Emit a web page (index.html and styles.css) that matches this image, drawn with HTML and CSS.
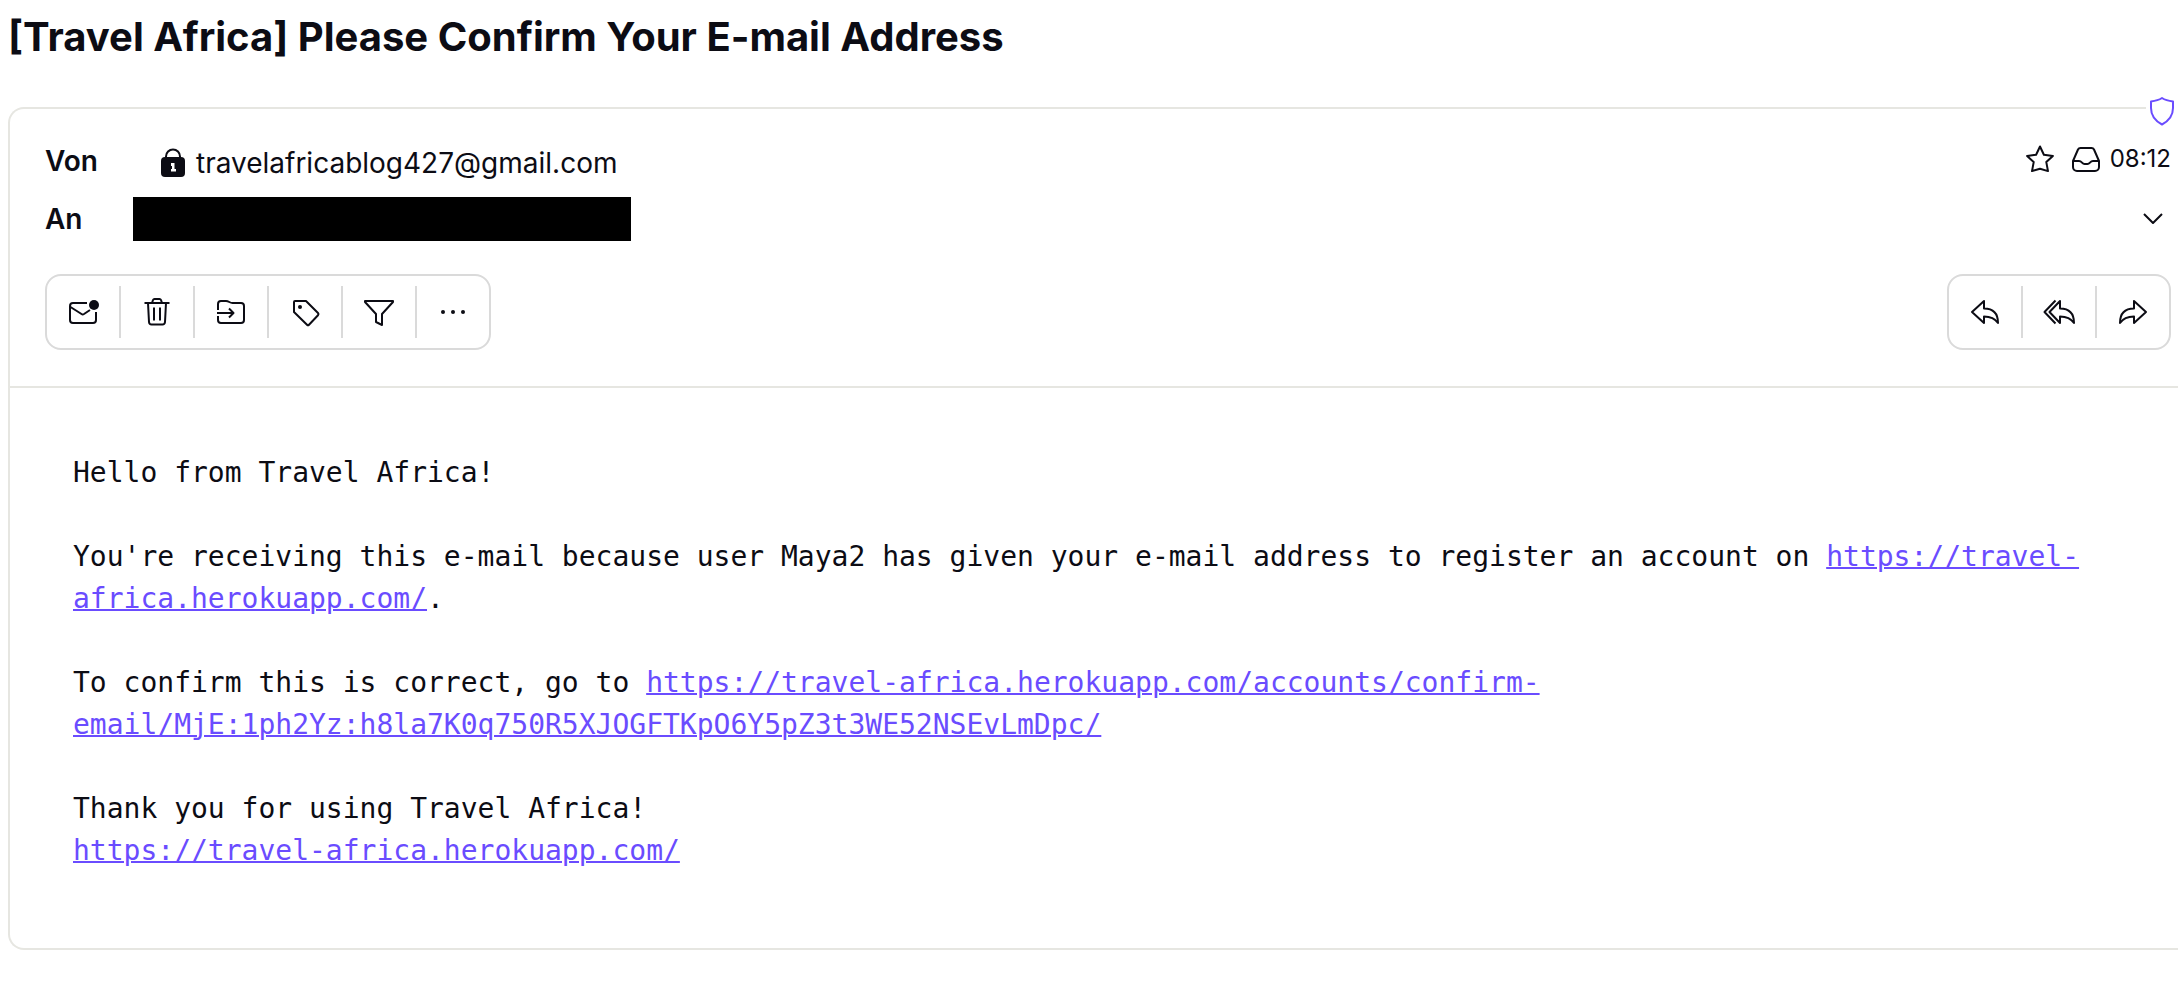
FILE: index.html
```html
<!DOCTYPE html>
<html lang="de">
<head>
<meta charset="utf-8">
<meta name="viewport" content="width=device-width, initial-scale=1">
<title>[Travel Africa] Please Confirm Your E-mail Address</title>
<link rel="stylesheet" href="styles.css">
</head>
<body>
<main class="message">
  <h1 class="subject">[Travel Africa] Please Confirm Your E-mail Address</h1>
  <article class="card">
    <span class="shield">
      <svg class="icon" viewBox="0 0 32 32"><path d="M16 3c3 2 7 3 11 3.500V13c0 8-4.500 13-11 16.500C9.500 26 5 21 5 13V6.500C9 6 13 5 16 3z"/></svg>
    </span>
    <header class="head">
      <div class="row">
        <span class="label">Von</span>
        <span class="sender">
          <svg class="lock" viewBox="0 0 28 32"><path class="shackle" d="M7 12V9.500a7 7 0 0 1 14 0V12"/><rect x="2" y="10" width="24" height="20" rx="4"/><path class="hole" d="M12 16h3.500v6H17v2.500h-5V22h1v-3h-1z"/></svg>
          <span>travelafricablog427@gmail.com</span>
        </span>
        <span class="meta">
          <button class="plain" type="button" aria-label="Markieren"><svg class="icon" viewBox="0 0 32 32"><path d="M16 3.500l3.900 8.200 9 1.200-6.600 6.200 1.700 9L16 25.800l-8 2.300 1.700-9-6.600-6.200 9-1.200z"/></svg></button>
          <span class="received">
            <svg class="icon" viewBox="0 0 32 32"><path d="M3 18 8 6.500C8.500 5.500 9.300 5 10.500 5h11c1.200 0 2 .5 2.500 1.500L29 18v6a4 4 0 0 1-4 4H7a4 4 0 0 1-4-4zM3 18h6c3 0 3 3 5.500 3h3c2.500 0 2.500-3 5.500-3h6"/></svg>
            <time datetime="08:12">08:12</time>
          </span>
        </span>
      </div>
      <div class="row">
        <span class="label">An</span>
        <span class="redacted"></span>
        <button class="plain expand" type="button" aria-label="Details anzeigen"><svg class="icon" viewBox="0 0 32 32"><path d="M7 11l9 9 9-9"/></svg></button>
      </div>
      <div class="actions">
        <div class="toolbar">
          <button type="button" aria-label="Ungelesen"><svg class="icon" viewBox="0 0 32 32"><path d="M20 7H6a3 3 0 0 0-3 3v14a3 3 0 0 0 3 3h20a3 3 0 0 0 3-3v-8M3.500 11l11 7q1.200.8 2.500 0l6-4"/><circle class="solid" cx="27" cy="9" r="5"/></svg></button>
          <button type="button" aria-label="Papierkorb"><svg class="icon" viewBox="0 0 32 32"><path d="M3.500 7h25M11 7l1-3q.4-1 1.500-1h5q1.100 0 1.500 1l1 3M7 7l1 19q.2 2.500 2.500 2.500h11q2.300 0 2.500-2.500L25 7M13 11.500v13M19 11.500v13"/></svg></button>
          <button type="button" aria-label="Verschieben"><svg class="icon" viewBox="0 0 32 32"><path d="M3 14V8a3 3 0 0 1 3-3h5c3 0 3.500 2 6.500 2H26a3 3 0 0 1 3 3v14a3 3 0 0 1-3 3H6a3 3 0 0 1-3-3v-4M2 17h16M14 12.500l4.500 4.500-4.500 4.500"/></svg></button>
          <button type="button" aria-label="Label"><svg class="icon" viewBox="0 0 32 32"><path d="M6 5h11l12 12q1 1.200 0 2.300L20 28.700q-1 1-2 0L5 16V6q0-1 1-1z"/><circle class="solid" cx="11" cy="11" r="2"/></svg></button>
          <button type="button" aria-label="Filter"><svg class="icon" viewBox="0 0 32 32"><path d="M2 5h28v1L19 18v11l-6-3v-8L2 6z"/></svg></button>
          <button type="button" aria-label="Mehr"><svg class="icon" viewBox="0 0 32 32"><g class="solid"><circle cx="6" cy="16" r="2"/><circle cx="16" cy="16" r="2"/><circle cx="26" cy="16" r="2"/></g></svg></button>
        </div>
        <div class="toolbar">
          <button type="button" aria-label="Antworten"><svg class="icon" viewBox="0 0 32 32"><path d="M3 16 15 5v7.500c8.500 0 14 4.500 14 14.500-3-4.500-7-6.500-14-6.500V27z"/></svg></button>
          <button type="button" aria-label="Allen antworten"><svg class="icon" viewBox="0 0 32 32"><path d="M6.500 16 17 5v7.500c8.500 0 14 4.500 14 14.500-3-4.500-7-6.500-14-6.500V27zM12.500 4.500 1.500 16l11 11.500"/></svg></button>
          <button type="button" aria-label="Weiterleiten"><svg class="icon" viewBox="0 0 32 32"><path d="M29 16 17 5v7.500C8.500 12.500 3 17 3 27c3-4.500 7-6.500 14-6.500V27z"/></svg></button>
        </div>
      </div>
    </header>
    <div class="content">
      <p>Hello from Travel Africa!</p>
      <p>You're receiving this e-mail because user Maya2 has given your e-mail address to register an account on <a href="https://travel-africa.herokuapp.com/">https://travel-africa.herokuapp.com/</a>.</p>
      <p>To confirm this is correct, go to <a href="https://travel-africa.herokuapp.com/accounts/confirm-email/MjE:1ph2Yz:h8la7K0q750R5XJOGFTKpO6Y5pZ3t3WE52NSEvLmDpc/">https://travel-africa.herokuapp.com/accounts/confirm-email/MjE:1ph2Yz:h8la7K0q750R5XJOGFTKpO6Y5pZ3t3WE52NSEvLmDpc/</a></p>
      <p>Thank you for using Travel Africa!<br><a href="https://travel-africa.herokuapp.com/">https://travel-africa.herokuapp.com/</a></p>
    </div>
  </article>
</main>
</body>
</html>
```
FILE: styles.css
```css
* { box-sizing: border-box; }

body {
  margin: 0;
  background: #fff;
  color: #0c0c14;
  font: 28px/44px Inter, "Liberation Sans", sans-serif;
}

.message { padding: 13px 0 48px 8px; }

.subject {
  margin: 0 0 46px;
  font-size: 40px;
  line-height: 48px;
  font-weight: 700;
}

.card {
  position: relative;
  border: 2px solid #e6e6e1;
  border-right: 0;
  border-radius: 16px 0 0 16px;
}

.icon {
  display: block;
  width: 32px;
  height: 32px;
  fill: none;
  stroke: currentColor;
  stroke-width: 2;
  stroke-linejoin: round;
}

.icon .solid { fill: currentColor; stroke: none; }

.shield {
  position: absolute;
  top: -14px;
  right: 0;
  background: #fff;
  color: #6a4cff;
}

.head {
  display: flex;
  flex-direction: column;
  gap: 14px;
  padding: 30px 7px 36px 35px;
  border-bottom: 2px solid #e6e6e1;
}

.row { display: flex; align-items: center; height: 44px; }

.label { width: 88px; font-weight: 600; }

.sender {
  display: flex;
  align-items: center;
  gap: 9px;
  padding: 4px 0 0 26px;
}

.lock { width: 28px; height: 32px; fill: currentColor; }
.lock .shackle { fill: none; stroke: currentColor; stroke-width: 2; }
.lock .hole { fill: #fff; }

.meta {
  display: flex;
  align-items: center;
  gap: 14px;
  height: 40px;
  margin-left: auto;
  align-self: flex-start;
}

.received { display: flex; align-items: center; gap: 8px; font-size: 24px; }

.redacted { width: 498px; height: 44px; background: #000; }

button {
  padding: 0;
  border: 0;
  background: none;
  color: inherit;
  font: inherit;
  cursor: pointer;
}

.expand { margin: 0 2px 0 auto; }

.actions { display: flex; justify-content: space-between; margin-top: 19px; }

.toolbar {
  display: flex;
  padding: 10px 0;
  border: 2px solid #dadada;
  border-radius: 16px;
}

.toolbar button {
  display: grid;
  place-items: center;
  box-sizing: content-box;
  width: 72px;
  height: 52px;
}

.toolbar button + button { border-left: 2px solid #dadada; }

.content {
  padding: 64px 63px 76px;
  font: 28px/42px "DejaVu Sans Mono", monospace;
}

.content p { margin: 0 0 42px; }
.content p:last-child { margin: 0; }

.content a {
  color: #6a4cff;
  text-decoration: underline;
  text-decoration-thickness: 2px;
}
```
